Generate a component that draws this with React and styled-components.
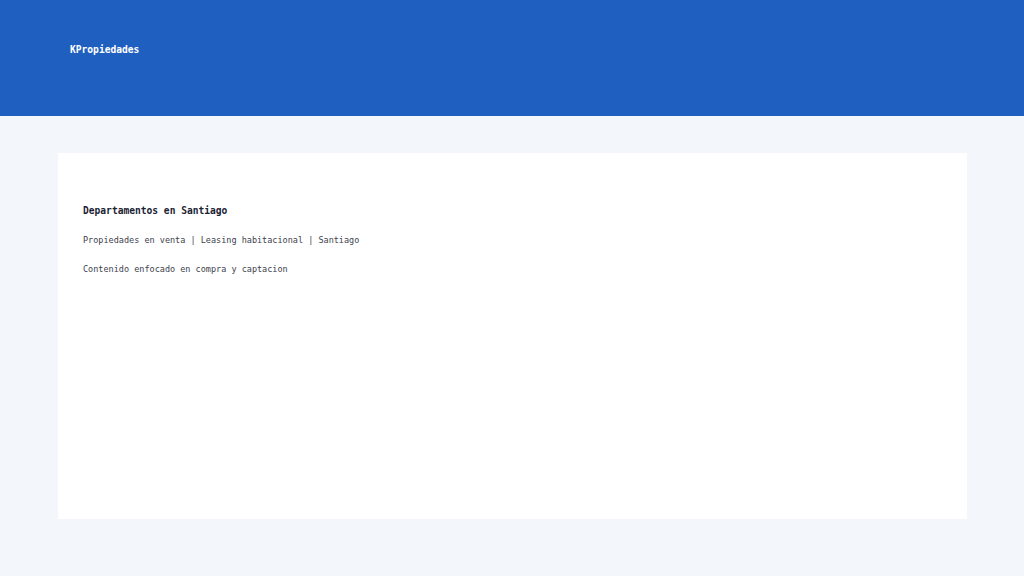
import React from 'react';
import styled, { createGlobalStyle } from 'styled-components';

const GlobalStyle = createGlobalStyle`
  html, body {
    margin: 0;
    padding: 0;
    background: #f3f6fa;
    font-family: "DejaVu Sans Mono", "Liberation Mono", monospace;
  }
`;

const Page = styled.div`
  min-height: 576px;
  background: #f3f6fa;
`;

const Header = styled.header`
  height: 116px;
  background: #1f5fc0;
  box-sizing: border-box;
  padding: 44px 70px 0;
`;

const Brand = styled.div`
  color: #ffffff;
  font-size: 9.6px;
  font-weight: bold;
  line-height: 12px;
`;

const Main = styled.main`
  padding: 37px 57px 0 58px;
`;

const Card = styled.section`
  background: #ffffff;
  height: 366px;
  box-sizing: border-box;
  padding: 52px 25px 0;
  display: flex;
  flex-direction: column;
  gap: 17px;
`;

const Title = styled.h1`
  margin: 0;
  font-size: 9.6px;
  font-weight: bold;
  line-height: 12px;
  color: #1b2333;
`;

const Line = styled.p`
  margin: 0;
  font-size: 8.5px;
  line-height: 12px;
  color: #3d424d;
`;

export default function App() {
  return (
    <Page>
      <GlobalStyle />
      <Header>
        <Brand>KPropiedades</Brand>
      </Header>
      <Main>
        <Card>
          <Title>Departamentos en Santiago</Title>
          <Line>Propiedades en venta | Leasing habitacional | Santiago</Line>
          <Line>Contenido enfocado en compra y captacion</Line>
        </Card>
      </Main>
    </Page>
  );
}
